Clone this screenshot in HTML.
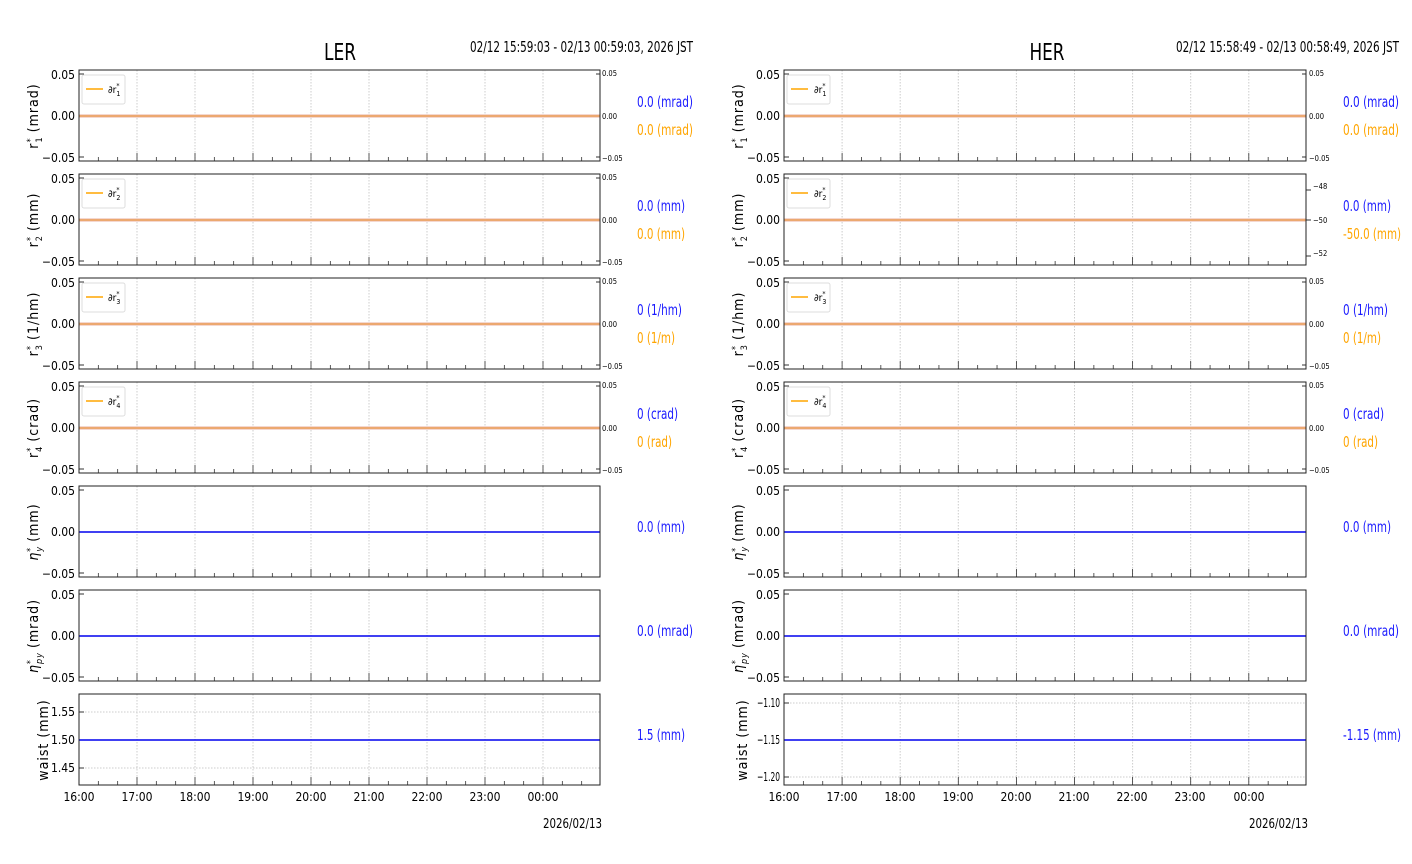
<!DOCTYPE html>
<html><head><meta charset="utf-8"><style>
html,body{margin:0;padding:0;background:#fff;width:1412px;height:864px;overflow:hidden}
svg{display:block}
text{font-family:"DejaVu Sans Condensed","Liberation Sans Narrow","Liberation Sans",sans-serif;font-stretch:condensed;fill:#000}
.t{font-size:12px}
.s{font-size:7.5px}
.yl{font-size:14px;font-family:"DejaVu Sans","Liberation Sans",sans-serif;font-stretch:normal;letter-spacing:1px}
.v{font-size:15px}
.b{fill:#1a1aff}.o{fill:#ffa500}
.lg{font-size:10px}
</style></head><body>
<svg id="s" width="1412" height="864" xmlns="http://www.w3.org/2000/svg">
<g id="g"></g>
<text x="340" y="60" font-size="23" text-anchor="middle" textLength="32" lengthAdjust="spacingAndGlyphs">LER</text>
<text x="470" y="52" font-size="15.5" textLength="223" lengthAdjust="spacingAndGlyphs">02/12 15:59:03 - 02/13 00:59:03, 2026 JST</text>
<text x="1047" y="60" font-size="23" text-anchor="middle" textLength="35" lengthAdjust="spacingAndGlyphs">HER</text>
<text x="1176" y="52" font-size="15.5" textLength="223" lengthAdjust="spacingAndGlyphs">02/12 15:58:49 - 02/13 00:58:49, 2026 JST</text>

<g class="t" text-anchor="end">
<text x="75" y="79">0.05</text><text x="75" y="120">0.00</text><text x="75" y="162">−0.05</text>
<text x="75" y="183">0.05</text><text x="75" y="224">0.00</text><text x="75" y="266">−0.05</text>
<text x="75" y="287">0.05</text><text x="75" y="328">0.00</text><text x="75" y="370">−0.05</text>
<text x="75" y="391">0.05</text><text x="75" y="432">0.00</text><text x="75" y="474">−0.05</text>
<text x="75" y="495">0.05</text><text x="75" y="536">0.00</text><text x="75" y="578">−0.05</text>
<text x="75" y="599">0.05</text><text x="75" y="640">0.00</text><text x="75" y="682">−0.05</text>
<text x="75" y="716">1.55</text><text x="75" y="744">1.50</text><text x="75" y="772">1.45</text>
<text x="780" y="79">0.05</text><text x="780" y="120">0.00</text><text x="780" y="162">−0.05</text>
<text x="780" y="183">0.05</text><text x="780" y="224">0.00</text><text x="780" y="266">−0.05</text>
<text x="780" y="287">0.05</text><text x="780" y="328">0.00</text><text x="780" y="370">−0.05</text>
<text x="780" y="391">0.05</text><text x="780" y="432">0.00</text><text x="780" y="474">−0.05</text>
<text x="780" y="495">0.05</text><text x="780" y="536">0.00</text><text x="780" y="578">−0.05</text>
<text x="780" y="599">0.05</text><text x="780" y="640">0.00</text><text x="780" y="682">−0.05</text>
<text x="780" y="707" textLength="23" lengthAdjust="spacingAndGlyphs">−1.10</text><text x="780" y="744" textLength="23" lengthAdjust="spacingAndGlyphs">−1.15</text><text x="780" y="781" textLength="23" lengthAdjust="spacingAndGlyphs">−1.20</text>
</g>
<g class="s">
<text x="602" y="76">0.05</text><text x="602" y="119">0.00</text><text x="602" y="161">−0.05</text>
<text x="602" y="180">0.05</text><text x="602" y="223">0.00</text><text x="602" y="265">−0.05</text>
<text x="602" y="284">0.05</text><text x="602" y="327">0.00</text><text x="602" y="369">−0.05</text>
<text x="602" y="388">0.05</text><text x="602" y="431">0.00</text><text x="602" y="473">−0.05</text>
<text x="1309" y="76">0.05</text><text x="1309" y="119">0.00</text><text x="1309" y="161">−0.05</text>
<text x="1313" y="189">−48</text><text x="1313" y="223">−50</text><text x="1313" y="256">−52</text>
<text x="1309" y="284">0.05</text><text x="1309" y="327">0.00</text><text x="1309" y="369">−0.05</text>
<text x="1309" y="388">0.05</text><text x="1309" y="431">0.00</text><text x="1309" y="473">−0.05</text>
</g>
<g class="t" text-anchor="middle" font-size="11.5">
<text x="79" y="801">16:00</text><text x="137" y="801">17:00</text><text x="195" y="801">18:00</text><text x="253" y="801">19:00</text><text x="311" y="801">20:00</text><text x="369" y="801">21:00</text><text x="427" y="801">22:00</text><text x="485" y="801">23:00</text><text x="543" y="801">00:00</text>
<text x="784" y="801">16:00</text><text x="842" y="801">17:00</text><text x="900" y="801">18:00</text><text x="958" y="801">19:00</text><text x="1016" y="801">20:00</text><text x="1074" y="801">21:00</text><text x="1132" y="801">22:00</text><text x="1190" y="801">23:00</text><text x="1249" y="801">00:00</text>
</g>
<text x="543" y="828" font-size="13.5" textLength="59" lengthAdjust="spacingAndGlyphs">2026/02/13</text>
<text x="1249" y="828" font-size="13.5" textLength="59" lengthAdjust="spacingAndGlyphs">2026/02/13</text>
<g class="v">
<text x="637" y="107" class="b" textLength="56" lengthAdjust="spacingAndGlyphs">0.0 (mrad)</text><text x="637" y="135" class="o" textLength="56" lengthAdjust="spacingAndGlyphs">0.0 (mrad)</text>
<text x="637" y="211" class="b" textLength="48" lengthAdjust="spacingAndGlyphs">0.0 (mm)</text><text x="637" y="239" class="o" textLength="48" lengthAdjust="spacingAndGlyphs">0.0 (mm)</text>
<text x="637" y="315" class="b" textLength="45" lengthAdjust="spacingAndGlyphs">0 (1/hm)</text><text x="637" y="343" class="o" textLength="38" lengthAdjust="spacingAndGlyphs">0 (1/m)</text>
<text x="637" y="419" class="b" textLength="41" lengthAdjust="spacingAndGlyphs">0 (crad)</text><text x="637" y="447" class="o" textLength="35" lengthAdjust="spacingAndGlyphs">0 (rad)</text>
<text x="637" y="532" class="b" textLength="48" lengthAdjust="spacingAndGlyphs">0.0 (mm)</text>
<text x="637" y="636" class="b" textLength="56" lengthAdjust="spacingAndGlyphs">0.0 (mrad)</text>
<text x="637" y="740" class="b" textLength="48" lengthAdjust="spacingAndGlyphs">1.5 (mm)</text>
<text x="1343" y="107" class="b" textLength="56" lengthAdjust="spacingAndGlyphs">0.0 (mrad)</text><text x="1343" y="135" class="o" textLength="56" lengthAdjust="spacingAndGlyphs">0.0 (mrad)</text>
<text x="1343" y="211" class="b" textLength="48" lengthAdjust="spacingAndGlyphs">0.0 (mm)</text><text x="1343" y="239" class="o" textLength="58" lengthAdjust="spacingAndGlyphs">-50.0 (mm)</text>
<text x="1343" y="315" class="b" textLength="45" lengthAdjust="spacingAndGlyphs">0 (1/hm)</text><text x="1343" y="343" class="o" textLength="38" lengthAdjust="spacingAndGlyphs">0 (1/m)</text>
<text x="1343" y="419" class="b" textLength="41" lengthAdjust="spacingAndGlyphs">0 (crad)</text><text x="1343" y="447" class="o" textLength="35" lengthAdjust="spacingAndGlyphs">0 (rad)</text>
<text x="1343" y="532" class="b" textLength="48" lengthAdjust="spacingAndGlyphs">0.0 (mm)</text>
<text x="1343" y="636" class="b" textLength="56" lengthAdjust="spacingAndGlyphs">0.0 (mrad)</text>
<text x="1343" y="740" class="b" textLength="58" lengthAdjust="spacingAndGlyphs">-1.15 (mm)</text>
</g>
<g class="lg">
<text x="108" y="93">∂r<tspan font-size="7" dy="3">1</tspan><tspan font-size="7" dy="-8" dx="-4">*</tspan></text>
<text x="108" y="197">∂r<tspan font-size="7" dy="3">2</tspan><tspan font-size="7" dy="-8" dx="-4">*</tspan></text>
<text x="108" y="301">∂r<tspan font-size="7" dy="3">3</tspan><tspan font-size="7" dy="-8" dx="-4">*</tspan></text>
<text x="108" y="405">∂r<tspan font-size="7" dy="3">4</tspan><tspan font-size="7" dy="-8" dx="-4">*</tspan></text>
<text x="814" y="93">∂r<tspan font-size="7" dy="3">1</tspan><tspan font-size="7" dy="-8" dx="-4">*</tspan></text>
<text x="814" y="197">∂r<tspan font-size="7" dy="3">2</tspan><tspan font-size="7" dy="-8" dx="-4">*</tspan></text>
<text x="814" y="301">∂r<tspan font-size="7" dy="3">3</tspan><tspan font-size="7" dy="-8" dx="-4">*</tspan></text>
<text x="814" y="405">∂r<tspan font-size="7" dy="3">4</tspan><tspan font-size="7" dy="-8" dx="-4">*</tspan></text>
</g>
<g class="yl" text-anchor="middle">
<text transform="translate(38,116) rotate(-90)">r<tspan font-size="9" dy="4">1</tspan><tspan font-size="9" dy="-9" dx="-6">*</tspan><tspan dy="5"> (mrad)</tspan></text>
<text transform="translate(38,220) rotate(-90)">r<tspan font-size="9" dy="4">2</tspan><tspan font-size="9" dy="-9" dx="-6">*</tspan><tspan dy="5"> (mm)</tspan></text>
<text transform="translate(38,324) rotate(-90)">r<tspan font-size="9" dy="4">3</tspan><tspan font-size="9" dy="-9" dx="-6">*</tspan><tspan dy="5"> (1/hm)</tspan></text>
<text transform="translate(38,428) rotate(-90)">r<tspan font-size="9" dy="4">4</tspan><tspan font-size="9" dy="-9" dx="-6">*</tspan><tspan dy="5"> (crad)</tspan></text>
<text transform="translate(38,532) rotate(-90)"><tspan font-style="italic">η</tspan><tspan font-size="9" dy="4" font-style="italic">y</tspan><tspan font-size="9" dy="-9" dx="-6">*</tspan><tspan dy="5"> (mm)</tspan></text>
<text transform="translate(38,636) rotate(-90)"><tspan font-style="italic">η</tspan><tspan font-size="9" dy="4" font-style="italic">py</tspan><tspan font-size="9" dy="-9" dx="-12">*</tspan><tspan dy="5" dx="6"> (mrad)</tspan></text>
<text transform="translate(48,740) rotate(-90)">waist (mm)</text>
<text transform="translate(743,116) rotate(-90)">r<tspan font-size="9" dy="4">1</tspan><tspan font-size="9" dy="-9" dx="-6">*</tspan><tspan dy="5"> (mrad)</tspan></text>
<text transform="translate(743,220) rotate(-90)">r<tspan font-size="9" dy="4">2</tspan><tspan font-size="9" dy="-9" dx="-6">*</tspan><tspan dy="5"> (mm)</tspan></text>
<text transform="translate(743,324) rotate(-90)">r<tspan font-size="9" dy="4">3</tspan><tspan font-size="9" dy="-9" dx="-6">*</tspan><tspan dy="5"> (1/hm)</tspan></text>
<text transform="translate(743,428) rotate(-90)">r<tspan font-size="9" dy="4">4</tspan><tspan font-size="9" dy="-9" dx="-6">*</tspan><tspan dy="5"> (crad)</tspan></text>
<text transform="translate(743,532) rotate(-90)"><tspan font-style="italic">η</tspan><tspan font-size="9" dy="4" font-style="italic">y</tspan><tspan font-size="9" dy="-9" dx="-6">*</tspan><tspan dy="5"> (mm)</tspan></text>
<text transform="translate(743,636) rotate(-90)"><tspan font-style="italic">η</tspan><tspan font-size="9" dy="4" font-style="italic">py</tspan><tspan font-size="9" dy="-9" dx="-12">*</tspan><tspan dy="5" dx="6"> (mrad)</tspan></text>
<text transform="translate(747,740) rotate(-90)">waist (mm)</text>
</g>
</svg>
<script>
(function(){
var g=document.getElementById('g'),h='';
function L(x1,y1,x2,y2,st){h+='<line x1="'+x1+'" y1="'+y1+'" x2="'+x2+'" y2="'+y2+'" '+st+'/>';}
var sides=[[79,600,58],[784,1306,58.1]];
for(var s=0;s<2;s++){var x0=sides[s][0],x1=sides[s][1],dx=sides[s][2];
 for(var p=0;p<7;p++){var t=70+p*104,b=t+91,m=t+46;
  for(var k=1;k<9;k++){var x=x0+k*dx;L(x,t,x,b,'stroke="#ccc" stroke-width="1" stroke-dasharray="1.5,1.5"');}
  if(p==6){var ys=s==0?[712,740,768]:[703,740,777];ys.forEach(function(y){L(x0,y,x1,y,'stroke="#ccc" stroke-dasharray="1.5,1.5"');});}
  for(var k=0;k<27;k++){var x=x0+k*dx/3;if(x>x1)break;L(x,b,x,b-(k%3==0?8:4),'stroke="#333" stroke-width="0.8"');}
  var yt=p==6?(s==0?[712,740,768]:[703,740,777]):[t+4,m,b-4];
  yt.forEach(function(y){L(x0,y,x0+5,y,'stroke="#333"');});
  if(p<4){if(s==1&&p==1){[t+16,m,b-9].forEach(function(y){L(x1,y,x1+5,y,'stroke="#333"');});}
   else{[t+4,m,b-4].forEach(function(y){L(x1-4,y,x1,y,'stroke="#333"');});}}
  if(p<4){L(x0,m,x1,m,'stroke="#e8b0a0" stroke-width="3"');L(x0,m,x1,m,'stroke="#f0a040" stroke-width="1"');
   var lx=x0+3;h+='<rect x="'+lx+'" y="'+(t+5)+'" width="43" height="29" rx="2" fill="#fff" stroke="#ddd"/>';
   L(lx+4,t+19,lx+21,t+19,'stroke="#ffa500" stroke-width="1.5"');}
  else{var yy=p==6?740:m;L(x0,yy,x1,yy,'stroke="#0000ee" stroke-width="1.6"');}
  h+='<rect x="'+x0+'" y="'+t+'" width="'+(x1-x0)+'" height="91" fill="none" stroke="#222" stroke-width="1"/>';
 }}
g.innerHTML=h;
})();
</script>
</body></html>
